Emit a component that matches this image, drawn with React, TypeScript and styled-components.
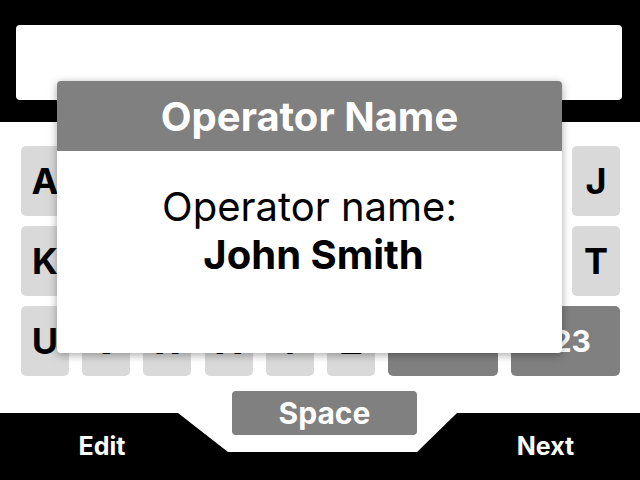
import styled, { createGlobalStyle } from "styled-components";

const GlobalStyle = createGlobalStyle`
    html, body {
        margin: 0;
        padding: 0;
        background: #ffffff;
    }

    body {
        font-family: Inter, "Liberation Sans", sans-serif;
    }
`;

type Key = {label: string; span?: number; dark?: boolean};

const rows: Key[][] = [
    "ABCDEFGHIJ".split("").map((l) => ({label: l})),
    "KLMNOPQRST".split("").map((l) => ({label: l})),
    [
        ..."UVWXYZ".split("").map((l) => ({label: l})),
        {label: "Del", span: 2, dark: true},
        {label: "123", span: 2, dark: true},
    ],
];

const App = () => {
    return (
        <>
            <GlobalStyle/>
            <Screen>
                <TopBar>
                    <NameInput/>
                </TopBar>

                <Keyboard>
                    {rows.flat().map((k, i) => (
                        <KeyButton key={i} $span={k.span ?? 1} $dark={!!k.dark}>
                            {k.label}
                        </KeyButton>
                    ))}
                </Keyboard>

                <Footer>
                    <SoftKey>Edit</SoftKey>
                    <SpaceKey>Space</SpaceKey>
                    <SoftKey $right>Next</SoftKey>
                </Footer>

                <Dialog>
                    <DialogHeader>Operator Name</DialogHeader>
                    <DialogBody>
                        <span>Operator name:</span>
                        <strong>John Smith</strong>
                    </DialogBody>
                </Dialog>
            </Screen>
        </>
    );
};

export default App;

const Screen = styled.div`
    position: relative;
    width: 640px;
    height: 480px;
    overflow: hidden;
    display: flex;
    flex-direction: column;
    background: #ffffff;
`;

const TopBar = styled.div`
    background: #000000;
    height: 122px;
    box-sizing: border-box;
    padding: 25px 18px 22px 16px;
`;

const NameInput = styled.div`
    background: #ffffff;
    height: 75px;
    border-radius: 4px;
`;

const Keyboard = styled.div`
    display: grid;
    grid-template-columns: repeat(10, 1fr);
    grid-auto-rows: 70px;
    column-gap: 13.2px;
    row-gap: 10px;
    padding: 24px 20px 15px 21px;
`;

const KeyButton = styled.div<{$span: number; $dark: boolean}>`
    grid-column: span ${(p) => p.$span};
    display: flex;
    align-items: center;
    justify-content: center;
    border-radius: 5px;
    background: ${(p) => (p.$dark ? "#808080" : "#d9d9d9")};
    color: ${(p) => (p.$dark ? "#ffffff" : "#000000")};
    font-size: ${(p) => (p.$dark ? "30px" : "36px")};
    font-weight: 700;
`;

const Footer = styled.div`
    position: relative;
    flex: 1;
    display: grid;
    grid-template-columns: 232px 185px 1fr;

    &::before {
        content: "";
        position: absolute;
        inset: 22px 0 0 0;
        background: #000000;
        clip-path: polygon(0 0, 178px 0, 228px 39px, 417px 39px, 457px 0, 100% 0, 100% 100%, 0 100%);
    }
`;

const SoftKey = styled.div<{$right?: boolean}>`
    position: relative;
    align-self: end;
    text-align: center;
    color: #ffffff;
    font-size: 25px;
    font-weight: 700;
    line-height: 30px;
    padding: ${(p) => (p.$right ? "0 0 19px 34px" : "0 28px 19px 0")};
`;

const SpaceKey = styled.div`
    position: relative;
    height: 44px;
    display: flex;
    align-items: center;
    justify-content: center;
    border-radius: 4px;
    background: #808080;
    color: #ffffff;
    font-size: 30px;
    font-weight: 700;
`;

const Dialog = styled.div`
    position: absolute;
    left: 57px;
    top: 81px;
    width: 505px;
    height: 272px;
    display: flex;
    flex-direction: column;
    background: #ffffff;
    border-radius: 4px;
    overflow: hidden;
    box-shadow: 0 2px 8px rgba(0, 0, 0, 0.35);
`;

const DialogHeader = styled.div`
    height: 70px;
    display: flex;
    align-items: center;
    justify-content: center;
    background: #808080;
    color: #ffffff;
    font-size: 40px;
    font-weight: 700;
`;

const DialogBody = styled.div`
    display: flex;
    flex-direction: column;
    align-items: center;
    padding-top: 32px;
    color: #000000;
    font-size: 40px;
    line-height: 48px;

    strong {
        font-weight: 700;
        margin-left: 8px;
    }
`;
